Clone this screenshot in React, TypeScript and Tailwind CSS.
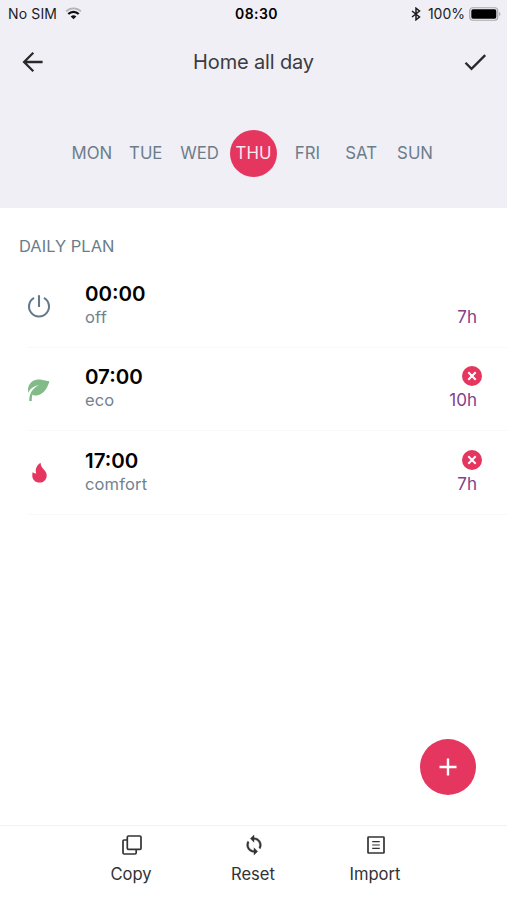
import { useState } from 'react';
import type { ReactNode } from 'react';
import { clsx } from 'clsx';

type Mode = 'off' | 'eco' | 'comfort';

interface PlanEntry {
    time: string;
    mode: Mode;
    duration: string;
    removable: boolean;
}

const DAYS = ['MON', 'TUE', 'WED', 'THU', 'FRI', 'SAT', 'SUN'];

const INITIAL_PLAN: PlanEntry[] = [
    { time: '00:00', mode: 'off', duration: '7h', removable: false },
    { time: '07:00', mode: 'eco', duration: '10h', removable: true },
    { time: '17:00', mode: 'comfort', duration: '7h', removable: true },
];

function StatusBar() {
    return (
        <div className="grid h-7 grid-cols-3 items-center pl-[8px] pr-[6px] text-[14px] text-[#1c1c1e]">
            <div className="-mt-px flex items-center gap-[8px]">
                <span className="tracking-[0.15px]">No SIM</span>
                <svg width="17" height="13" viewBox="0 0 17 13" fill="none">
                    <path d="M1 4.4 A10.6 10.6 0 0 1 16 4.4" stroke="#b4b4b8" strokeWidth="1.8" />
                    <path d="M3.3 7.1 A7 7 0 0 1 13.7 7.1" stroke="#111" strokeWidth="2.2" />
                    <path d="M5.7 9.6 A4 4 0 0 1 11.3 9.6 L8.5 12.2 Z" fill="#111" />
                </svg>
            </div>
            <span className="-mt-px pl-[4px] text-center font-semibold tracking-[0.4px] text-black">08:30</span>
            <div className="-mt-px flex items-center justify-end">
                <svg className="mr-[7px]" width="10" height="14" viewBox="0 0 10 14" fill="none" stroke="#1c1c1e" strokeWidth="1.5">
                    <path d="M1 4 L8.5 10 L5 12.8 V1.2 L8.5 4 L1 10" />
                </svg>
                <span className="mr-[4px]">100%</span>
                <svg width="32" height="14" viewBox="0 0 32 14">
                    <rect x="0.75" y="0.75" width="28" height="12.5" rx="3" fill="#f0eff5" stroke="#a9a9ad" strokeWidth="1.2" />
                    <rect x="2.3" y="2.3" width="25" height="9.4" rx="1.7" fill="#000" />
                    <path d="M30.2 4.8 a2.6 2.6 0 0 1 0 4.4 Z" fill="#a9a9ad" />
                </svg>
            </div>
        </div>
    );
}

function ModeIcon({ mode }: { mode: Mode }) {
    if (mode === 'off') {
        return (
            <svg width="24" height="24" viewBox="0 0 24 24" fill="none" stroke="#64798a" strokeWidth="2.1">
                <path d="M12 1.2 V13" />
                <path d="M7 3.8 A10 10 0 1 0 17 3.8" />
            </svg>
        );
    }
    if (mode === 'eco') {
        return (
            <svg width="24" height="24" viewBox="0 0 24 24">
                <path
                    d="M22.4 3.3 C20.8 9.4 17.2 16 10.8 17.2 C8.5 17.7 6.5 17.2 5.5 16.4 C4.9 18.3 4.8 20.5 4.8 23 H2.2 C2.2 16.5 4.5 11 12 7 C6.4 8.2 2.6 11.2 1.3 15 C0.3 9.8 2 5.3 6.3 2.8 C10.6 0.3 15.5 1.7 18.2 2.5 C19.8 2.9 21.1 3.1 22.4 3.3 Z"
                    fill="#82ba88"
                />
            </svg>
        );
    }
    return (
        <svg width="24" height="24" viewBox="0 0 24 24">
            <path
                d="M13.6 1.8 C13.6 4.8 15 6.6 16.8 8.4 C18.8 10.4 19.7 12.3 19.7 14.4 C19.7 18.4 16.7 21.6 12.5 21.6 C8.3 21.6 5.3 18.6 5.3 14.8 C5.3 13.3 5.4 12.2 5.7 11 C6.7 12.2 7.8 12.6 9.2 12.4 C7.8 8.4 9.8 4.2 13.6 1.8 Z"
                fill="#e4365f"
            />
        </svg>
    );
}

function PlanRow({ entry, onRemove }: { entry: PlanEntry; onRemove: () => void }) {
    return (
        <li>
            <div className="flex h-[82.5px] pl-[27px] pr-[25px]">
                <div className="mt-[30px]">
                    <ModeIcon mode={entry.mode} />
                </div>
                <div className="ml-[34px] flex-1 pt-[17.5px]">
                    <div className="text-[20.5px] font-semibold leading-6 text-black">{entry.time}</div>
                    <div className="text-[16.5px] leading-[23px] tracking-[0.15px] text-[#718290]">{entry.mode}</div>
                </div>
                <div className="flex flex-col items-end pt-[18.5px]">
                    <div className="h-[23px]">
                        {entry.removable && (
                            <button onClick={onRemove} aria-label="Remove" className="block">
                                <svg width="20" height="20" viewBox="0 0 20 20">
                                    <circle cx="10" cy="10" r="10" fill="#e4365f" />
                                    <path d="M6.3 6.3 L13.7 13.7 M13.7 6.3 L6.3 13.7" stroke="#fff" strokeWidth="2" />
                                </svg>
                            </button>
                        )}
                    </div>
                    <span className="mr-[5px] text-[17px] leading-[23px] text-[#84408a]">{entry.duration}</span>
                </div>
            </div>
            <div className="ml-[28px] h-px bg-[#f8f8f8]" />
        </li>
    );
}

function ToolbarButton({ label, children }: { label: string; children: ReactNode }) {
    return (
        <button className="flex w-[122px] flex-col items-center">
            <span className="flex h-[22px] items-center">{children}</span>
            <span className="mt-[6px] pr-px text-[16.6px] leading-6">{label}</span>
        </button>
    );
}

export default function App() {
    const [selectedDay, setSelectedDay] = useState('THU');
    const [plan, setPlan] = useState(INITIAL_PLAN);

    const removeEntry = (time: string) => {
        setPlan(plan.filter((entry) => entry.time !== time));
    };

    return (
        <div className="flex h-[900px] w-[507px] flex-col overflow-hidden bg-white font-['Inter','Liberation_Sans',sans-serif]">
            <header className="h-[208px] bg-[#f0eff5]">
                <StatusBar />

                <nav className="flex h-[68px] items-center justify-between px-[20px]">
                    <button aria-label="Back">
                        <svg width="24" height="24" viewBox="0 0 24 24" fill="none" stroke="#29292c" strokeWidth="2.3">
                            <path d="M13.3 2.8 L4.1 12 L13.3 21.2 M4.1 12 H22.6" />
                        </svg>
                    </button>
                    <h1 className="text-[20px] tracking-[-0.15px] text-[#3b3b40]">Home all day</h1>
                    <button aria-label="Save">
                        <svg width="24" height="24" viewBox="0 0 24 24" fill="none" stroke="#29292c" strokeWidth="2.3">
                            <path d="M2.5 12.8 L8.5 18.8 L22.2 5.1" />
                        </svg>
                    </button>
                </nav>

                <div className="ml-[65px] mt-[34px] grid w-[377px] grid-cols-7 justify-items-center">
                    {DAYS.map((day) => (
                        <button
                            key={day}
                            onClick={() => setSelectedDay(day)}
                            className={clsx(
                                'flex size-[47px] items-center justify-center rounded-full text-[16.8px]',
                                selectedDay === day ? 'bg-[#e4365f] text-[#f8e9ef]' : 'text-[#6c7d8a]'
                            )}
                        >
                            {day}
                        </button>
                    ))}
                </div>
            </header>

            <main className="flex flex-1 flex-col">
                <h2 className="ml-[19px] mt-[26px] text-[16.5px] leading-6 text-[#6c7d8a]">DAILY PLAN</h2>
                <ul className="mt-[6px]">
                    {plan.map((entry) => (
                        <PlanRow key={entry.time} entry={entry} onRemove={() => removeEntry(entry.time)} />
                    ))}
                </ul>

                {/* Add new time slot */}
                <button
                    aria-label="Add"
                    className="mb-[30px] mr-[31px] mt-auto flex size-14 items-center justify-center self-end rounded-full bg-[#e4365f]"
                >
                    <svg width="18" height="18" viewBox="0 0 18 18" stroke="#fff" strokeWidth="2.4">
                        <path d="M9 0.5 V17.5 M0.5 9 H17.5" />
                    </svg>
                </button>
            </main>

            <footer className="flex h-[75px] justify-center border-t border-[#f2f2f2] pt-[8px] text-[#333336]">
                <ToolbarButton label="Copy">
                    <svg width="20" height="20" viewBox="0 0 20 20" fill="none" stroke="#333336" strokeWidth="1.7">
                        <rect x="5.3" y="1" width="13.7" height="13.4" rx="1.2" />
                        <path d="M5.3 5 H2.2 Q1 5 1 6.2 V17.8 Q1 19 2.2 19 H13 Q14.2 19 14.2 17.8 V14.4" />
                    </svg>
                </ToolbarButton>
                <ToolbarButton label="Reset">
                    <svg width="22" height="22" viewBox="0 0 24 24" fill="#333336" stroke="#333336" strokeWidth="0.4">
                        <path d="M12 4V1L8 5l4 4V6c3.31 0 6 2.69 6 6 0 1.01-.25 1.97-.7 2.8l1.46 1.46A7.93 7.93 0 0 0 20 12c0-4.42-3.58-8-8-8zm0 14c-3.31 0-6-2.69-6-6 0-1.01.25-1.97.7-2.8L5.24 7.74A7.93 7.93 0 0 0 4 12c0 4.42 3.58 8 8 8v3l4-4-4-4v3z" />
                    </svg>
                </ToolbarButton>
                <ToolbarButton label="Import">
                    <svg width="18" height="18" viewBox="0 0 18 18" fill="none" stroke="#333336">
                        <rect x="1" y="1" width="16" height="16" rx="0.6" strokeWidth="1.7" />
                        <path d="M5.2 5.6 H12.8 M5.2 9 H12.8 M5.2 12.4 H12.8" strokeWidth="1.2" />
                    </svg>
                </ToolbarButton>
            </footer>
        </div>
    );
}
